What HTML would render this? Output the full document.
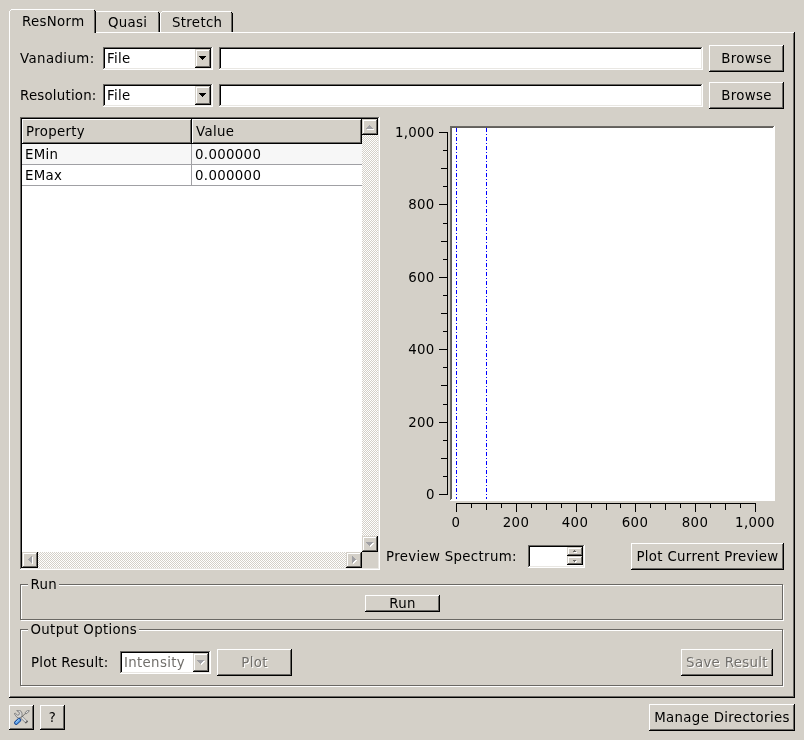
<!DOCTYPE html><html><head><meta charset="utf-8"><title>Indirect Bayes</title><style>
html,body{margin:0;padding:0;}
body{width:804px;height:740px;background:#d4d0c8;overflow:hidden;position:relative;
 font-family:"DejaVu Sans","Liberation Sans",sans-serif;font-size:13.333px;letter-spacing:0.33px;color:#000;}
.a{position:absolute;box-sizing:border-box;}
.t{position:absolute;white-space:nowrap;line-height:16px;height:16px;will-change:transform;margin-top:1px;}
/* win shades: c1 outerTL c2 outerBR c3 innerTL c4 innerBR */
.ws{position:absolute;box-sizing:border-box;
 background:
 linear-gradient(var(--f),var(--f)) 2px 2px / calc(100% - 4px) calc(100% - 4px) no-repeat,
 linear-gradient(var(--c3),var(--c3)) 1px 1px / calc(100% - 3px) calc(100% - 3px) no-repeat,
 linear-gradient(var(--c4),var(--c4)) 1px 1px / calc(100% - 2px) calc(100% - 2px) no-repeat,
 linear-gradient(var(--c1),var(--c1)) 0 0 / calc(100% - 1px) calc(100% - 1px) no-repeat,
 var(--c2);}
.btn{--c1:#fff;--c2:#000;--c3:#d4d0c8;--c4:#6a6864;--f:#d4d0c8;}
.sunk{--c1:#6a6864;--c2:#fff;--c3:#000;--c4:#e9e7e3;--f:#fff;}
.cbtn{--c1:#d4d0c8;--c2:#000;--c3:#fff;--c4:#6a6864;--f:#d4d0c8;}
.btn .t,.cbtn .t{left:0;right:0;text-align:center;}
.dis{color:#716f6b;text-shadow:1px 1px 0 #fff;}
.groove{background-color:#d4d0c8;background-image:
 linear-gradient(45deg,#fff 25%,transparent 25%,transparent 75%,#fff 75%),
 linear-gradient(45deg,#fff 25%,transparent 25%,transparent 75%,#fff 75%);
 background-size:2px 2px;background-position:0 0,1px 1px;}
.gb{position:absolute;box-sizing:border-box;border:1px solid #6a6864;box-shadow:1px 1px 0 #fff, inset 1px 1px 0 #fff;}
.gbt{position:absolute;background:#d4d0c8;white-space:nowrap;line-height:16px;height:16px;padding:0 0 0 3px;will-change:transform;margin-top:1px;}
</style></head><body>
<div class="ws btn" style="left:9px;top:32px;width:786px;height:666px;"></div>
<div class="a" style="left:9px;top:11px;width:1px;height:23px;background:#fff;"></div>
<div class="a" style="left:10px;top:10px;width:1px;height:1px;background:#fff;"></div>
<div class="a" style="left:11px;top:9px;width:83px;height:1px;background:#fff;"></div>
<div class="a" style="left:10px;top:32px;width:84px;height:2px;background:#d4d0c8;"></div>
<div class="a" style="left:94px;top:11px;width:1px;height:22px;background:#6a6864;"></div>
<div class="a" style="left:95px;top:11px;width:1px;height:22px;background:#000;"></div>
<div class="a" style="left:94px;top:10px;width:1px;height:1px;background:#000;"></div>
<div class="a" style="left:96px;top:11px;width:62px;height:1px;background:#fff;"></div>
<div class="a" style="left:158px;top:13px;width:1px;height:19px;background:#6a6864;"></div>
<div class="a" style="left:159px;top:13px;width:1px;height:19px;background:#000;"></div>
<div class="a" style="left:158px;top:12px;width:1px;height:1px;background:#000;"></div>
<div class="a" style="left:160px;top:13px;width:1px;height:19px;background:#fff;"></div>
<div class="a" style="left:161px;top:12px;width:1px;height:1px;background:#fff;"></div>
<div class="a" style="left:162px;top:11px;width:69px;height:1px;background:#fff;"></div>
<div class="a" style="left:231px;top:13px;width:1px;height:19px;background:#6a6864;"></div>
<div class="a" style="left:232px;top:13px;width:1px;height:19px;background:#000;"></div>
<div class="a" style="left:231px;top:12px;width:1px;height:1px;background:#000;"></div>
<div class="t " style="left:21.5px;top:13px;">ResNorm</div>
<div class="t " style="left:108px;top:14px;">Quasi</div>
<div class="t " style="left:172px;top:14px;">Stretch</div>
<div class="t " style="left:20px;top:50px;letter-spacing:0.4px">Vanadium:</div>
<div class="ws sunk" style="left:103px;top:47px;width:110px;height:23px;"><div class="t" style="left:4px;top:3px">File</div></div>
<div class="ws cbtn" style="left:195px;top:49px;width:16px;height:19px;"></div>
<svg class="a" style="left:199px;top:56px" width="10" height="10" shape-rendering="crispEdges"><rect x="0" y="0" width="7" height="1" fill="#000"/><rect x="1" y="1" width="5" height="1" fill="#000"/><rect x="2" y="2" width="3" height="1" fill="#000"/><rect x="3" y="3" width="1" height="1" fill="#000"/></svg>
<div class="ws sunk" style="left:219px;top:47px;width:484px;height:23px;"></div>
<div class="ws btn" style="left:709px;top:45px;width:75px;height:27px;"><div class="t" style="top:5px">Browse</div></div>
<div class="t " style="left:20px;top:87px;letter-spacing:0.22px">Resolution:</div>
<div class="ws sunk" style="left:103px;top:84px;width:110px;height:23px;"><div class="t" style="left:4px;top:3px">File</div></div>
<div class="ws cbtn" style="left:195px;top:86px;width:16px;height:19px;"></div>
<svg class="a" style="left:199px;top:93px" width="10" height="10" shape-rendering="crispEdges"><rect x="0" y="0" width="7" height="1" fill="#000"/><rect x="1" y="1" width="5" height="1" fill="#000"/><rect x="2" y="2" width="3" height="1" fill="#000"/><rect x="3" y="3" width="1" height="1" fill="#000"/></svg>
<div class="ws sunk" style="left:219px;top:84px;width:484px;height:23px;"></div>
<div class="ws btn" style="left:709px;top:82px;width:75px;height:27px;"><div class="t" style="top:5px">Browse</div></div>
<div class="ws sunk" style="left:20px;top:117px;width:360px;height:453px;"></div>
<div class="ws btn" style="left:22px;top:119px;width:170px;height:25px;"><div class="t" style="left:4px;top:4px;text-align:left">Property</div></div>
<div class="ws btn" style="left:192px;top:119px;width:170px;height:25px;"><div class="t" style="left:4px;top:4px;text-align:left">Value</div></div>
<div class="a" style="left:22px;top:144px;width:340px;height:20px;background:#f7f7f7;"></div>
<div class="a" style="left:22px;top:164px;width:340px;height:1px;background:#a0a0a4;"></div>
<div class="a" style="left:22px;top:185px;width:340px;height:1px;background:#a0a0a4;"></div>
<div class="a" style="left:191px;top:144px;width:1px;height:42px;background:#a0a0a4;"></div>
<div class="t " style="left:25px;top:146px;">EMin</div>
<div class="t " style="left:25px;top:167px;">EMax</div>
<div class="t " style="left:195px;top:146px;">0.000000</div>
<div class="t " style="left:195px;top:167px;">0.000000</div>
<div class="a groove" style="left:362px;top:119px;width:16px;height:433px"></div>
<div class="ws cbtn" style="left:362px;top:119px;width:16px;height:16px;"></div>
<svg class="a" style="left:366px;top:125px" width="10" height="10" shape-rendering="crispEdges"><rect x="4" y="1" width="1" height="1" fill="#fff"/><rect x="3" y="2" width="3" height="1" fill="#fff"/><rect x="2" y="3" width="5" height="1" fill="#fff"/><rect x="1" y="4" width="7" height="1" fill="#fff"/><rect x="3" y="0" width="1" height="1" fill="#a0a0a4"/><rect x="2" y="1" width="3" height="1" fill="#a0a0a4"/><rect x="1" y="2" width="5" height="1" fill="#a0a0a4"/><rect x="0" y="3" width="7" height="1" fill="#a0a0a4"/></svg>
<div class="ws cbtn" style="left:362px;top:536px;width:16px;height:16px;"></div>
<svg class="a" style="left:366px;top:542px" width="10" height="10" shape-rendering="crispEdges"><rect x="1" y="1" width="7" height="1" fill="#fff"/><rect x="2" y="2" width="5" height="1" fill="#fff"/><rect x="3" y="3" width="3" height="1" fill="#fff"/><rect x="4" y="4" width="1" height="1" fill="#fff"/><rect x="0" y="0" width="7" height="1" fill="#a0a0a4"/><rect x="1" y="1" width="5" height="1" fill="#a0a0a4"/><rect x="2" y="2" width="3" height="1" fill="#a0a0a4"/><rect x="3" y="3" width="1" height="1" fill="#a0a0a4"/></svg>
<div class="a groove" style="left:22px;top:552px;width:340px;height:16px"></div>
<div class="ws cbtn" style="left:22px;top:552px;width:16px;height:16px;"></div>
<svg class="a" style="left:28px;top:556px" width="10" height="10" shape-rendering="crispEdges"><rect x="1" y="4" width="1" height="1" fill="#fff"/><rect x="2" y="3" width="1" height="3" fill="#fff"/><rect x="3" y="2" width="1" height="5" fill="#fff"/><rect x="4" y="1" width="1" height="7" fill="#fff"/><rect x="0" y="3" width="1" height="1" fill="#a0a0a4"/><rect x="1" y="2" width="1" height="3" fill="#a0a0a4"/><rect x="2" y="1" width="1" height="5" fill="#a0a0a4"/><rect x="3" y="0" width="1" height="7" fill="#a0a0a4"/></svg>
<div class="ws cbtn" style="left:346px;top:552px;width:16px;height:16px;"></div>
<svg class="a" style="left:352px;top:556px" width="10" height="10" shape-rendering="crispEdges"><rect x="1" y="1" width="1" height="7" fill="#fff"/><rect x="2" y="2" width="1" height="5" fill="#fff"/><rect x="3" y="3" width="1" height="3" fill="#fff"/><rect x="4" y="4" width="1" height="1" fill="#fff"/><rect x="0" y="0" width="1" height="7" fill="#a0a0a4"/><rect x="1" y="1" width="1" height="5" fill="#a0a0a4"/><rect x="2" y="2" width="1" height="3" fill="#a0a0a4"/><rect x="3" y="3" width="1" height="1" fill="#a0a0a4"/></svg>
<div class="a" style="left:362px;top:552px;width:16px;height:16px;background:#d4d0c8;"></div>
<svg class="a" style="left:380px;top:110px" width="414" height="430" shape-rendering="crispEdges"><rect x="70" y="16" width="325" height="375" fill="#fff"/><rect x="70" y="16" width="324" height="1" fill="#6a6864"/><rect x="70" y="16" width="1" height="374" fill="#6a6864"/><rect x="71" y="17" width="322" height="1" fill="#625f5b"/><rect x="71" y="17" width="1" height="372" fill="#625f5b"/><line x1="76.5" y1="18" x2="76.5" y2="389" stroke="#00f" stroke-width="1" stroke-dasharray="4 2 1 2"/><line x1="106.5" y1="18" x2="106.5" y2="389" stroke="#00f" stroke-width="1" stroke-dasharray="4 2 1 2"/><rect x="67" y="22" width="1" height="363" fill="#000"/><rect x="59" y="22" width="8" height="1" fill="#000"/><rect x="63" y="40" width="4" height="1" fill="#000"/><rect x="61" y="58" width="6" height="1" fill="#000"/><rect x="63" y="76" width="4" height="1" fill="#000"/><rect x="59" y="94" width="8" height="1" fill="#000"/><rect x="63" y="113" width="4" height="1" fill="#000"/><rect x="61" y="131" width="6" height="1" fill="#000"/><rect x="63" y="149" width="4" height="1" fill="#000"/><rect x="59" y="167" width="8" height="1" fill="#000"/><rect x="63" y="185" width="4" height="1" fill="#000"/><rect x="61" y="203" width="6" height="1" fill="#000"/><rect x="63" y="221" width="4" height="1" fill="#000"/><rect x="59" y="239" width="8" height="1" fill="#000"/><rect x="63" y="257" width="4" height="1" fill="#000"/><rect x="61" y="275" width="6" height="1" fill="#000"/><rect x="63" y="294" width="4" height="1" fill="#000"/><rect x="59" y="312" width="8" height="1" fill="#000"/><rect x="63" y="330" width="4" height="1" fill="#000"/><rect x="61" y="348" width="6" height="1" fill="#000"/><rect x="63" y="366" width="4" height="1" fill="#000"/><rect x="59" y="384" width="8" height="1" fill="#000"/><rect x="76" y="393" width="300" height="1" fill="#000"/><rect x="76" y="394" width="1" height="8" fill="#000"/><rect x="91" y="394" width="1" height="4" fill="#000"/><rect x="106" y="394" width="1" height="6" fill="#000"/><rect x="121" y="394" width="1" height="4" fill="#000"/><rect x="136" y="394" width="1" height="8" fill="#000"/><rect x="151" y="394" width="1" height="4" fill="#000"/><rect x="166" y="394" width="1" height="6" fill="#000"/><rect x="181" y="394" width="1" height="4" fill="#000"/><rect x="196" y="394" width="1" height="8" fill="#000"/><rect x="211" y="394" width="1" height="4" fill="#000"/><rect x="226" y="394" width="1" height="6" fill="#000"/><rect x="240" y="394" width="1" height="4" fill="#000"/><rect x="255" y="394" width="1" height="8" fill="#000"/><rect x="270" y="394" width="1" height="4" fill="#000"/><rect x="285" y="394" width="1" height="6" fill="#000"/><rect x="300" y="394" width="1" height="4" fill="#000"/><rect x="315" y="394" width="1" height="8" fill="#000"/><rect x="330" y="394" width="1" height="4" fill="#000"/><rect x="345" y="394" width="1" height="6" fill="#000"/><rect x="360" y="394" width="1" height="4" fill="#000"/><rect x="375" y="394" width="1" height="8" fill="#000"/></svg>
<div class="t" style="left:380px;width:54.7px;text-align:right;top:124.0px">1,000</div>
<div class="t" style="left:380px;width:54.7px;text-align:right;top:196.4px">800</div>
<div class="t" style="left:380px;width:54.7px;text-align:right;top:268.8px">600</div>
<div class="t" style="left:380px;width:54.7px;text-align:right;top:341.2px">400</div>
<div class="t" style="left:380px;width:54.7px;text-align:right;top:413.6px">200</div>
<div class="t" style="left:380px;width:54.7px;text-align:right;top:486.0px">0</div>
<div class="t" style="left:425.7px;width:60px;text-align:center;top:514px">0</div>
<div class="t" style="left:485.5px;width:60px;text-align:center;top:514px">200</div>
<div class="t" style="left:545.3px;width:60px;text-align:center;top:514px">400</div>
<div class="t" style="left:605.1px;width:60px;text-align:center;top:514px">600</div>
<div class="t" style="left:664.9px;width:60px;text-align:center;top:514px">800</div>
<div class="t" style="left:724.7px;width:60px;text-align:center;top:514px">1,000</div>
<div class="t " style="left:386px;top:548px;">Preview Spectrum:</div>
<div class="ws sunk" style="left:528px;top:545px;width:57px;height:23px;"></div>
<div class="ws cbtn" style="left:567px;top:547px;width:16px;height:9px;"></div>
<div class="ws cbtn" style="left:567px;top:556px;width:16px;height:9px;"></div>
<div class="a" style="left:575px;top:551px;width:1px;height:1px;background:#fff;"></div>
<div class="a" style="left:574px;top:552px;width:3px;height:1px;background:#fff;"></div>
<div class="a" style="left:574px;top:561px;width:3px;height:1px;background:#fff;"></div>
<div class="a" style="left:575px;top:562px;width:1px;height:1px;background:#fff;"></div>
<div class="a" style="left:574px;top:550px;width:1px;height:1px;background:#6a6864;"></div>
<div class="a" style="left:573px;top:551px;width:3px;height:1px;background:#6a6864;"></div>
<div class="a" style="left:573px;top:560px;width:3px;height:1px;background:#6a6864;"></div>
<div class="a" style="left:574px;top:561px;width:1px;height:1px;background:#6a6864;"></div>
<div class="ws btn" style="left:631px;top:543px;width:153px;height:27px;"><div class="t" style="top:5px">Plot Current Preview</div></div>
<div class="gb" style="left:20px;top:584px;width:763px;height:36px"></div>
<div class="gbt" style="left:28px;top:576px;width:28px;text-indent:-0.5px">Run</div>
<div class="ws btn" style="left:365px;top:595px;width:75px;height:17px;"><div class="t" style="top:0px">Run</div></div>
<div class="gb" style="left:20px;top:629px;width:763px;height:57px"></div>
<div class="gbt" style="left:28px;top:621px;width:108px;text-indent:-0.5px">Output Options</div>
<div class="t " style="left:31px;top:654px;letter-spacing:0.2px">Plot Result:</div>
<div class="ws sunk" style="left:120px;top:651px;width:91px;height:23px;"><div class="t dis" style="left:4px;top:3px">Intensity</div></div>
<div class="ws cbtn" style="left:193px;top:653px;width:16px;height:19px;"></div>
<svg class="a" style="left:197px;top:660px" width="10" height="10" shape-rendering="crispEdges"><rect x="1" y="1" width="7" height="1" fill="#fff"/><rect x="2" y="2" width="5" height="1" fill="#fff"/><rect x="3" y="3" width="3" height="1" fill="#fff"/><rect x="4" y="4" width="1" height="1" fill="#fff"/><rect x="0" y="0" width="7" height="1" fill="#a0a0a4"/><rect x="1" y="1" width="5" height="1" fill="#a0a0a4"/><rect x="2" y="2" width="3" height="1" fill="#a0a0a4"/><rect x="3" y="3" width="1" height="1" fill="#a0a0a4"/></svg>
<div class="ws btn" style="left:217px;top:649px;width:75px;height:27px;"><div class="t dis" style="top:5px">Plot</div></div>
<div class="ws btn" style="left:681px;top:649px;width:92px;height:27px;"><div class="t dis" style="top:5px">Save Result</div></div>
<div class="ws btn" style="left:9px;top:705px;width:25px;height:25px;"><div class="t" style="top:4px"></div></div>
<svg class="a" style="left:14px;top:710px" width="16" height="16" viewBox="0 0 16 16"><line x1="6.6" y1="6.3" x2="13.0" y2="12.5" stroke="#8e8e8e" stroke-width="3.1" stroke-linecap="butt"/><line x1="11.9" y1="11.4" x2="13.0" y2="12.5" stroke="#5e5e5e" stroke-width="3.1" stroke-linecap="butt"/><line x1="6.4" y1="6.0" x2="12.0" y2="11.5" stroke="#e0e0e0" stroke-width="1.7"/><path d="M3.0 0.1 L5.6 0.3 L7.2 1.4 L8.0 3.2 L8.0 5.6 L6.6 7.6 L4.6 8.0 L3.0 7.4 L0.2 3.6 L1.3 3.2 L3.5 5.2 L5.0 4.8 L5.5 3.2 L4.7 1.8 L2.9 0.9 Z" fill="#d6d6d6" stroke="#6f6f6f" stroke-width="0.8" stroke-linejoin="round"/><line x1="7.4" y1="7.6" x2="11.3" y2="3.4" stroke="#5a5a5a" stroke-width="0.8"/><path d="M11.1 2.7 L13.5 0.3 L14.8 0.0 L15.1 1.1 L12.9 3.5 L11.6 3.8 Z" fill="#dedede" stroke="#666" stroke-width="0.8" stroke-linejoin="round"/><line x1="2.2" y1="12.8" x2="5.2" y2="10.0" stroke="#0e3f8f" stroke-width="4.0" stroke-linecap="round"/><line x1="2.2" y1="12.8" x2="5.2" y2="10.0" stroke="#5a9fe6" stroke-width="2.4" stroke-linecap="round"/><line x1="1.9" y1="12.3" x2="4.6" y2="9.8" stroke="#bfe0fb" stroke-width="0.9" stroke-linecap="round"/></svg>
<div class="ws btn" style="left:40px;top:705px;width:25px;height:25px;"><div class="t" style="top:4px">?</div></div>
<div class="ws btn" style="left:649px;top:704px;width:146px;height:27px;"><div class="t" style="top:5px">Manage Directories</div></div>
</body></html>
